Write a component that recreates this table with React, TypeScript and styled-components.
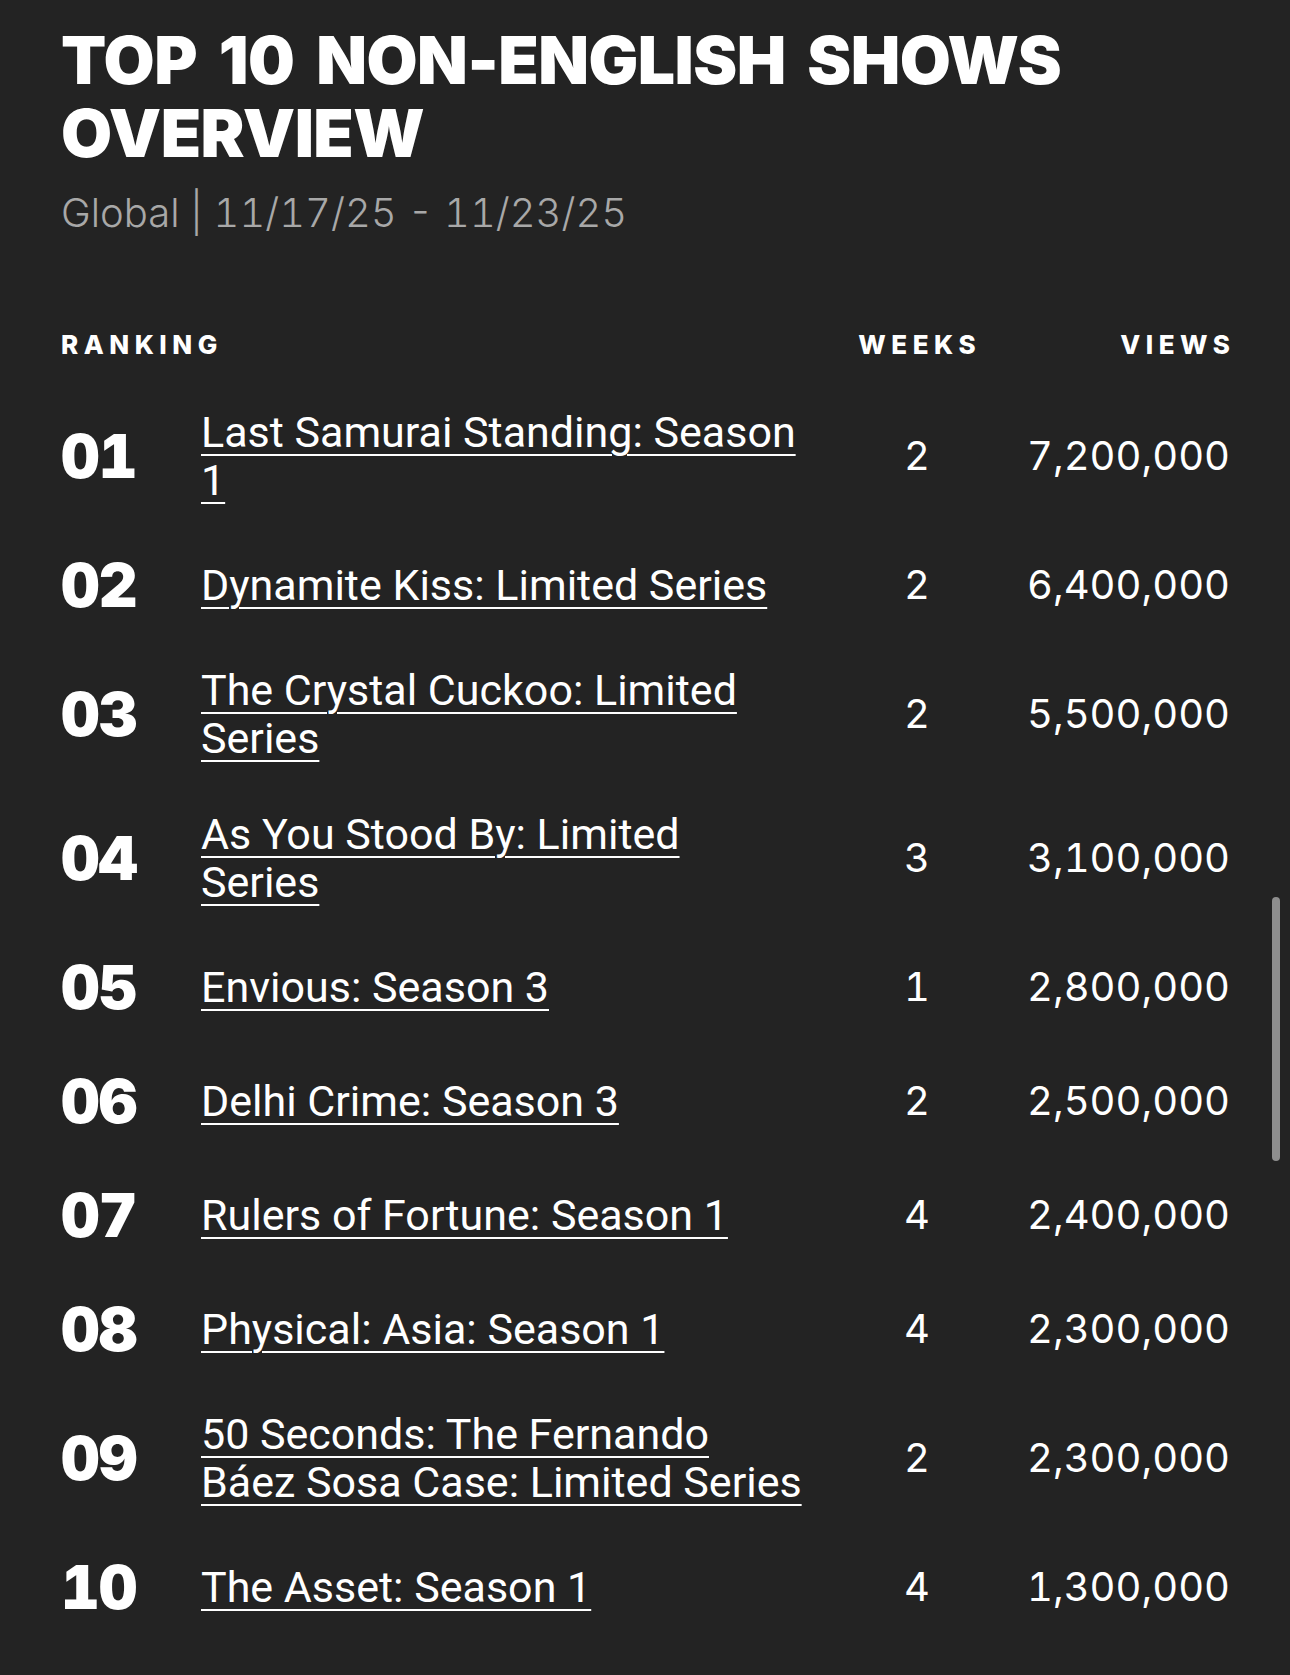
import styled, { createGlobalStyle } from 'styled-components';

const GlobalStyle = createGlobalStyle`
  html, body {
    margin: 0;
    padding: 0;
    background: #232323;
    overflow: hidden;
  }
`;

type Show = {
  rank: string;
  // lines as they wrap on the page
  title: string[];
  weeks: number;
  views: string;
};

const shows: Show[] = [
  { rank: '01', title: ['Last Samurai Standing: Season', '1'], weeks: 2, views: '7,200,000' },
  { rank: '02', title: ['Dynamite Kiss: Limited Series'], weeks: 2, views: '6,400,000' },
  { rank: '03', title: ['The Crystal Cuckoo: Limited', 'Series'], weeks: 2, views: '5,500,000' },
  { rank: '04', title: ['As You Stood By: Limited', 'Series'], weeks: 3, views: '3,100,000' },
  { rank: '05', title: ['Envious: Season 3'], weeks: 1, views: '2,800,000' },
  { rank: '06', title: ['Delhi Crime: Season 3'], weeks: 2, views: '2,500,000' },
  { rank: '07', title: ['Rulers of Fortune: Season 1'], weeks: 4, views: '2,400,000' },
  { rank: '08', title: ['Physical: Asia: Season 1'], weeks: 4, views: '2,300,000' },
  { rank: '09', title: ['50 Seconds: The Fernando', 'Báez Sosa Case: Limited Series'], weeks: 2, views: '2,300,000' },
  { rank: '10', title: ['The Asset: Season 1'], weeks: 4, views: '1,300,000' },
];

const Page = styled.main`
  box-sizing: border-box;
  width: 1290px;
  height: 1675px;
  padding: 24px 60px 0 61px;
  color: #ffffff;
  font-family: Inter, 'Noto Sans', sans-serif;
`;

const Heading = styled.h1`
  margin: 0;
  font-family: Inter, sans-serif;
  font-weight: 900;
  font-size: 66px;
  line-height: 73px;
  letter-spacing: -0.5px;
  word-spacing: 9px;
  text-transform: uppercase;
  max-width: 1090px;
`;

const Subtitle = styled.p`
  margin: 19px 0 0;
  font-family: Inter, sans-serif;
  font-weight: 300;
  font-size: 40px;
  line-height: 48px;
  font-variant-numeric: tabular-nums;
  color: #a8a8a8;
`;

const Table = styled.section`
  margin-top: 93px;
  display: flex;
  flex-direction: column;
`;

const Grid = styled.div`
  display: grid;
  grid-template-columns: 140px 610px 1fr 207px;
  align-items: center;
`;

const HeadRow = styled(Grid)`
  padding-bottom: 24px;
`;

const HeadCell = styled.div<{ $align: 'left' | 'center' | 'right' }>`
  font-family: Inter, sans-serif;
  font-weight: 800;
  font-size: 26px;
  line-height: 30px;
  letter-spacing: 5.5px;
  text-align: ${(p) => p.$align};
  margin-right: ${(p) => (p.$align === 'right' ? '-5.5px' : '0')};
  padding-left: ${(p) => (p.$align === 'center' ? '5.5px' : '0')};
`;

const Row = styled(Grid)`
  padding: 24px 0;
`;

const Rank = styled.div`
  font-family: Inter, sans-serif;
  font-weight: 900;
  font-size: 60px;
  line-height: 66px;
  letter-spacing: -1px;
  font-variant-numeric: tabular-nums;
`;

const TitleCell = styled.div`
  display: flex;
  flex-direction: column;
  align-items: flex-start;
`;

const TitleLine = styled.a`
  color: #ffffff;
  font-family: Roboto, sans-serif;
  font-weight: 400;
  font-size: 43px;
  line-height: 48px;
  white-space: nowrap;
  text-decoration: underline;
  text-decoration-thickness: 2px;
  text-underline-offset: 7px;
  cursor: pointer;
`;

const Number = styled.div<{ $align: 'center' | 'right' }>`
  font-family: Inter, sans-serif;
  font-weight: 400;
  font-size: 40px;
  line-height: 48px;
  font-variant-numeric: tabular-nums;
  text-align: ${(p) => p.$align};
`;

const Scrollbar = styled.div`
  position: fixed;
  top: 897px;
  right: 10px;
  width: 8px;
  height: 264px;
  border-radius: 4px;
  background: #8e8e8e;
`;

export default function App() {
  return (
    <>
      <GlobalStyle />
      <Page>
        <Heading>Top 10 Non-English Shows Overview</Heading>
        <Subtitle>Global | 11/17/25 - 11/23/25</Subtitle>
        <Table>
          <HeadRow>
            <HeadCell $align="left">RANKING</HeadCell>
            <div />
            <HeadCell $align="center">WEEKS</HeadCell>
            <HeadCell $align="right">VIEWS</HeadCell>
          </HeadRow>
          {shows.map((s) => (
            <Row key={s.rank}>
              <Rank>{s.rank}</Rank>
              <TitleCell>
                {s.title.map((line) => (
                  <TitleLine key={line}>{line}</TitleLine>
                ))}
              </TitleCell>
              <Number $align="center">{s.weeks}</Number>
              <Number $align="right">{s.views}</Number>
            </Row>
          ))}
        </Table>
      </Page>
      <Scrollbar />
    </>
  );
}
